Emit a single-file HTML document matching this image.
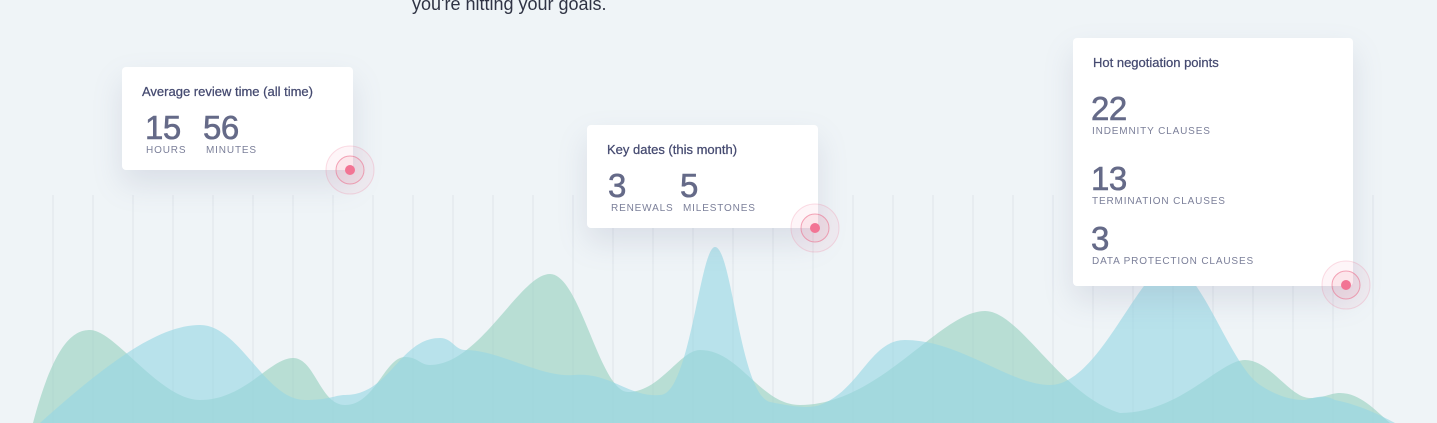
<!DOCTYPE html>
<html><head><meta charset="utf-8"><style>
*{margin:0;padding:0;box-sizing:border-box}
body{width:1437px;height:423px;overflow:hidden;background:#eff4f7;font-family:"Liberation Sans",sans-serif;position:relative}
.top{position:absolute;left:412px;top:-6px;font-size:18px;color:#2f3344}
svg{position:absolute;left:0;top:0}
.card{position:absolute;background:#fff;border-radius:4px;box-shadow:0 14px 30px rgba(120,130,160,0.18)}
.t{position:absolute;font-size:13px;color:#454a70;-webkit-text-stroke:0.25px #454a70}
.n{position:absolute;font-size:33px;color:#656a88;letter-spacing:-0.5px;-webkit-text-stroke:0.6px #656a88}
.l{position:absolute;font-size:10px;color:#7b7f99;letter-spacing:0.85px}
</style></head><body>
<div class="top">you're hitting your goals.</div>
<svg width="1437" height="423">
<g stroke="#dfe5ea" stroke-width="1">
<line x1="53" y1="195" x2="53" y2="423"/><line x1="93" y1="195" x2="93" y2="423"/><line x1="133" y1="195" x2="133" y2="423"/><line x1="173" y1="195" x2="173" y2="423"/><line x1="213" y1="195" x2="213" y2="423"/><line x1="253" y1="195" x2="253" y2="423"/><line x1="293" y1="195" x2="293" y2="423"/><line x1="333" y1="195" x2="333" y2="423"/><line x1="373" y1="195" x2="373" y2="423"/><line x1="413" y1="195" x2="413" y2="423"/><line x1="453" y1="195" x2="453" y2="423"/><line x1="493" y1="195" x2="493" y2="423"/><line x1="533" y1="195" x2="533" y2="423"/><line x1="573" y1="195" x2="573" y2="423"/><line x1="613" y1="195" x2="613" y2="423"/><line x1="653" y1="195" x2="653" y2="423"/><line x1="693" y1="195" x2="693" y2="423"/><line x1="733" y1="195" x2="733" y2="423"/><line x1="773" y1="195" x2="773" y2="423"/><line x1="813" y1="195" x2="813" y2="423"/><line x1="853" y1="195" x2="853" y2="423"/><line x1="893" y1="195" x2="893" y2="423"/><line x1="933" y1="195" x2="933" y2="423"/><line x1="973" y1="195" x2="973" y2="423"/><line x1="1013" y1="195" x2="1013" y2="423"/><line x1="1053" y1="195" x2="1053" y2="423"/><line x1="1093" y1="195" x2="1093" y2="423"/><line x1="1133" y1="195" x2="1133" y2="423"/><line x1="1173" y1="195" x2="1173" y2="423"/><line x1="1213" y1="195" x2="1213" y2="423"/><line x1="1253" y1="195" x2="1253" y2="423"/><line x1="1293" y1="195" x2="1293" y2="423"/><line x1="1333" y1="195" x2="1333" y2="423"/><line x1="1373" y1="195" x2="1373" y2="423"/>
</g>
<path fill="rgba(150,208,190,0.62)" d="M33,423 C55,340 75,330 90,330 C115,330 160,400 200,400 C245,400 270,358 293,358 C315,358 320,405 345,405 C375,405 385,357 405,357 C418,357 420,365 430,365 C480,365 520,274 550,274 C580,274 600,392 628,392 C660,392 680,350 700,350 C740,350 760,405 800,405 C880,405 940,311 985,311 C1020,311 1060,395 1120,413 C1180,413 1220,360 1245,360 C1270,360 1290,398 1310,398 C1325,398 1330,393 1340,393 C1360,393 1375,410 1390,423 Z"/>
<path fill="rgba(150,214,228,0.62)" d="M40,423 C110,360 160,325 200,325 C240,325 265,400 305,400 C330,400 335,395 345,395 C390,395 400,338 440,338 C452,338 455,350 465,350 C500,350 540,378 575,375 C610,372 630,398 660,395 C690,395 700,247 715,247 C732,247 740,395 770,402 C800,408 810,408 820,405 C860,390 870,340 905,340 C960,340 1010,385 1050,385 C1100,385 1140,265 1170,265 C1200,265 1230,365 1260,385 C1280,398 1295,400 1305,400 C1320,396 1325,395 1335,400 C1360,405 1380,415 1395,423 Z"/>
</svg>
<div class="card" style="left:122px;top:67px;width:231px;height:103px">
<div class="t" style="left:20px;top:17px">Average review time (all time)</div>
<div class="n" style="left:23px;top:42px">15</div><div class="n" style="left:81px;top:42px">56</div>
<div class="l" style="left:24px;top:78px">HOURS</div><div class="l" style="left:84px;top:78px">MINUTES</div>
</div>
<div class="card" style="left:587px;top:125px;width:231px;height:103px">
<div class="t" style="left:20px;top:17px">Key dates (this month)</div>
<div class="n" style="left:21px;top:42px">3</div><div class="n" style="left:93px;top:42px">5</div>
<div class="l" style="left:24px;top:78px">RENEWALS</div><div class="l" style="left:96px;top:78px">MILESTONES</div>
</div>
<div class="card" style="left:1073px;top:38px;width:280px;height:248px">
<div class="t" style="left:20px;top:17px">Hot negotiation points</div>
<div class="n" style="left:18px;top:52px">22</div><div class="l" style="left:19px;top:88px">INDEMNITY CLAUSES</div>
<div class="n" style="left:18px;top:122px">13</div><div class="l" style="left:19px;top:158px">TERMINATION CLAUSES</div>
<div class="n" style="left:18px;top:182px">3</div><div class="l" style="left:19px;top:218px">DATA PROTECTION CLAUSES</div>
</div>
<svg width="1437" height="423">
<g>
<circle cx="350" cy="170" r="24" fill="rgba(240,120,150,0.07)" stroke="rgba(240,120,150,0.25)"/>
<circle cx="350" cy="170" r="14" fill="rgba(240,120,150,0.12)" stroke="rgba(235,110,140,0.6)"/>
<circle cx="350" cy="170" r="5" fill="#f27494"/>
<circle cx="815" cy="228" r="24" fill="rgba(240,120,150,0.07)" stroke="rgba(240,120,150,0.25)"/>
<circle cx="815" cy="228" r="14" fill="rgba(240,120,150,0.12)" stroke="rgba(235,110,140,0.6)"/>
<circle cx="815" cy="228" r="5" fill="#f27494"/>
<circle cx="1346" cy="285" r="24" fill="rgba(240,120,150,0.07)" stroke="rgba(240,120,150,0.25)"/>
<circle cx="1346" cy="285" r="14" fill="rgba(240,120,150,0.12)" stroke="rgba(235,110,140,0.6)"/>
<circle cx="1346" cy="285" r="5" fill="#f27494"/>
</g>
</svg>
</body></html>
